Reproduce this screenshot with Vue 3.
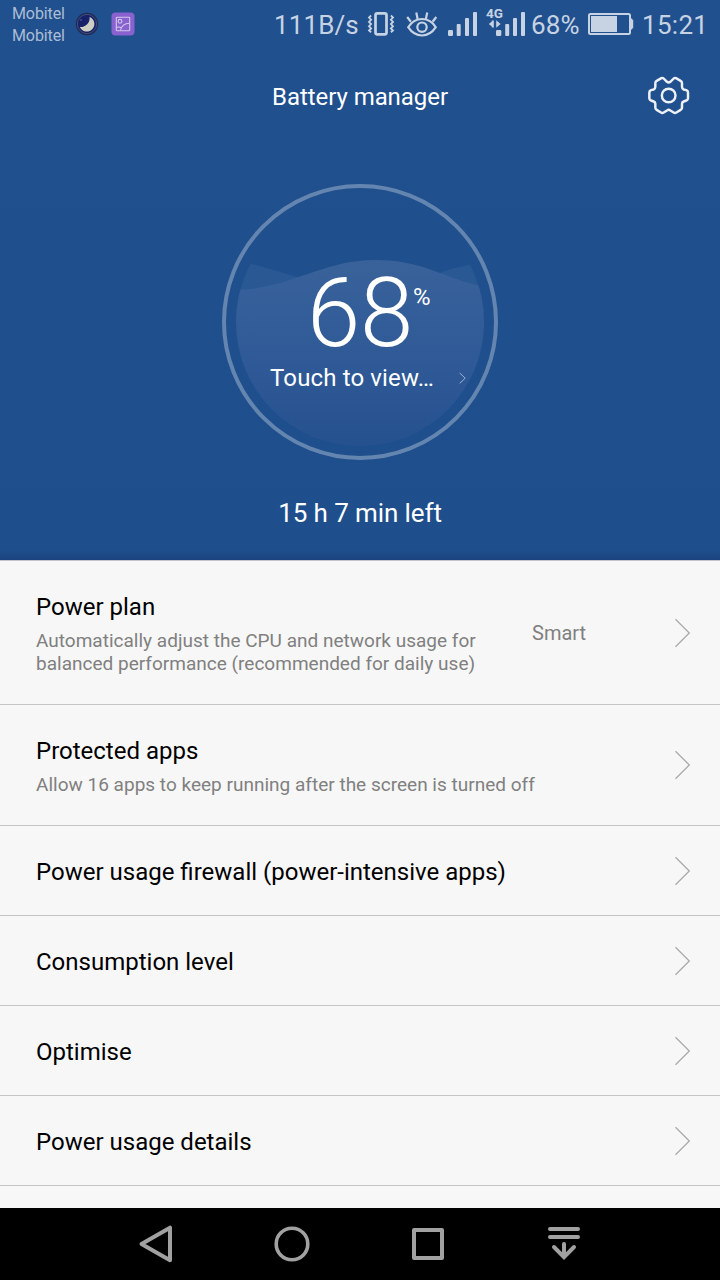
<script setup>
const rows = [
  { title: 'Power plan', lines: ['Automatically adjust the CPU and network usage for', 'balanced performance (recommended for daily use)'], value: 'Smart', height: 144 },
  { title: 'Protected apps', lines: ['Allow 16 apps to keep running after the screen is turned off'], height: 121 },
  { title: 'Power usage firewall (power-intensive apps)', height: 90 },
  { title: 'Consumption level', height: 90 },
  { title: 'Optimise', height: 90 },
  { title: 'Power usage details', height: 90 },
]
</script>

<template>
  <div class="screen">
    <section class="hero">
      <header class="status">
        <div class="carriers"><span>Mobitel</span><span>Mobitel</span></div>
        <svg class="moon" width="24" height="24" viewBox="0 0 24 24">
          <circle cx="12" cy="12" r="11.2" fill="#202b55" />
          <circle cx="12" cy="12" r="9.6" fill="#17216a" stroke="#55608a" stroke-width="0.7" />
          <path d="M14.5 4.9A7.6 7.6 0 1 1 4.8 15A8.8 8.8 0 0 0 14.5 4.9Z" fill="#cdcfc3" />
          <circle cx="6" cy="8" r="0.7" fill="#7384b4" />
        </svg>
        <svg class="gallery" width="24" height="24" viewBox="0 0 24 24">
          <rect x="0.5" y="0.5" width="23" height="23" rx="4" fill="#8a62cf" />
          <g fill="none" stroke="#d0c8ea" stroke-width="1.1">
            <rect x="5.3" y="5.3" width="13.4" height="13.4" rx="0.8" />
            <circle cx="9" cy="9.3" r="1.9" />
            <path d="M9.5 18.5C10.5 13.5 13.5 11.2 18.5 11.2M5.3 15.5Q8.5 14.2 10.3 16.2" />
          </g>
        </svg>
        <span class="speed">111B/s</span>
        <svg class="vibrate" width="28" height="26" viewBox="0 0 28 26" fill="none" stroke="#c7d3e3">
          <rect x="8.5" y="2.4" width="11" height="21" rx="1.8" stroke-width="2.7" />
          <path d="M4.1 4.5L2 6.5L4.1 8.7L2 10.9L4.1 13L2 15.2L4.1 17.4L2 19.5L4.1 21.3M23.9 4.5L26 6.5L23.9 8.7L26 10.9L23.9 13L26 15.2L23.9 17.4L26 19.5L23.9 21.3" stroke-width="1.8" />
        </svg>
        <svg class="eye" width="32" height="27" viewBox="0 0 32 27" fill="none" stroke="#c7d3e3" stroke-width="2.2">
          <path d="M2.2 16.2C6 10 10.4 8 16 8S26 10 29.8 16.2C26 22 21.5 24.5 16 24.5S6 22 2.2 16.2Z" />
          <circle cx="16" cy="16.2" r="4.7" />
          <path d="M1.2 6L4.9 10.700M10.300 1.500L11.600 8M21.200 1.500L19.900 8M30.300 6L26.600 10.700" />
        </svg>
        <svg class="bars" width="30" height="24" viewBox="0 0 30 24" fill="#c7d3e3">
          <rect x="0" y="18" width="5" height="6" rx="1.2" /><rect x="8.7" y="12" width="4" height="12" rx="1" />
          <rect x="17" y="6" width="4" height="18" rx="1" /><rect x="25" y="0" width="4" height="24" rx="1" />
        </svg>
        <div class="mobile">
          <span class="network">4G</span>
          <svg width="40" height="30" viewBox="0 0 40 30" fill="#c7d3e3">
            <path d="M7.4 14.2V21.8L2.8 18ZM10.2 14.2V21.8L14.6 18ZM5.8 14.5H7.8V21.5H5.8Z" />
            <rect x="10" y="24" width="5.3" height="6" rx="1.2" /><rect x="19.2" y="18" width="4" height="12" rx="1" />
            <rect x="27" y="12" width="4" height="18" rx="1" /><rect x="35" y="6" width="4" height="24" rx="1" />
          </svg>
        </div>
        <span class="percent">68%</span>
        <svg class="battery" width="46" height="22" viewBox="0 0 46 22">
          <rect x="1" y="1" width="41" height="20" rx="1.5" fill="none" stroke="#c7d3e3" stroke-width="2" />
          <rect x="3" y="3" width="26" height="16" fill="#c7d3e3" />
          <path d="M43 5.5H44.2V6.8H45.2V15.2H44.2V16.5H43Z" fill="#c7d3e3" />
        </svg>
        <span class="clock">15:21</span>
      </header>

      <div class="titlebar">
        <h1>Battery manager</h1>
        <svg class="gear" width="44" height="44" viewBox="48 38.5 132 132" fill="none" stroke="#edf1f6" stroke-width="7.4" stroke-linejoin="round">
          <path d="M108 62L111 65Q116 69 121 65L131 55Q134 52 138 54L152 62Q156 64 156 69V80Q156 86 161 88L169 90Q174 92 174 97V115Q174 119 169 121L161 124Q156 126 156 131V143Q156 147 152 149L139 157Q135 160 131 157L121 151Q116 147 111 151L101 157Q97 160 93 157L80 149Q76 147 76 143V131Q76 126 71 124L63 121Q58 119 58 115V97Q58 92 63 90L71 88Q76 86 76 80V69Q76 64 80 62L94 54Q98 52 101 55Z" />
          <circle cx="116" cy="106" r="20.5" />
        </svg>
      </div>

      <div class="gauge">
        <svg class="water" width="276" height="276" viewBox="0 0 276 276">
          <defs>
            <clipPath id="tank"><circle cx="138" cy="138" r="124" /></clipPath>
            <linearGradient id="sea" x1="0" y1="0" x2="0" y2="1">
              <stop offset="0" stop-color="#39629a" /><stop offset="0.5" stop-color="#2f5a97" /><stop offset="0.93" stop-color="#25518e" />
            </linearGradient>
          </defs>
          <g clip-path="url(#tank)">
            <path d="M10 77L28 79.5C45 83 60 89 78 93.5C130 106 174 100 217 89C232 84 244 81 266 77V130H10Z" fill="#295893" />
            <path d="M10 106C68 106 98 76 154 76C203 76 226 97 266 103.500V276H10Z" fill="url(#sea)" />
          </g>
          <circle cx="138" cy="138" r="136" fill="none" stroke="#6485b0" stroke-width="4" />
        </svg>
        <div class="reading"><span class="number">68</span><span class="unit">%</span></div>
        <div class="hint">
          <span>Touch to view…</span>
          <svg width="8" height="14" viewBox="0 0 8 14" fill="none" stroke="#9fb4d0" stroke-width="1"><path d="M1.7 2L7.2 7.2L1.7 12.4" /></svg>
        </div>
      </div>
      <p class="left">15 h 7 min left</p>
    </section>

    <main class="list">
      <div v-for="row in rows" :key="row.title" class="row" :style="{ height: row.height + 'px' }">
        <div class="copy">
          <h2>{{ row.title }}</h2>
          <p v-if="row.lines"><span v-for="line in row.lines" :key="line">{{ line }}</span></p>
        </div>
        <span v-if="row.value" class="value">{{ row.value }}</span>
        <svg class="chevron" width="18" height="30" viewBox="0 0 18 30" fill="none" stroke="#aaa" stroke-width="1.3"><path d="M2.5 1.3L16.3 15L2.500 28.700" /></svg>
      </div>
    </main>

    <nav class="nav">
      <svg width="136" height="72" viewBox="0 0 136 72" stroke-width="4" stroke-linejoin="round"><path d="M82 19.7V52.2L53.5 36Z" /></svg>
      <svg width="136" height="72" viewBox="0 0 136 72" stroke-width="3.6"><circle cx="68" cy="36" r="15.8" /></svg>
      <svg width="136" height="72" viewBox="0 0 136 72" stroke-width="4" stroke-linejoin="round"><rect x="54" y="22" width="28" height="28" /></svg>
      <svg width="136" height="72" viewBox="0 0 136 72" stroke-width="4" stroke-linecap="round"><path d="M54 21H82M54 29H82M68 36V48M58 39L68 49.2L78 39" /></svg>
    </nav>
  </div>
</template>

<style scoped>
.screen { width: 720px; height: 1280px; overflow: hidden; display: flex; flex-direction: column; background: #f7f7f7; font-family: Roboto, "Noto Sans", sans-serif; }
h1, h2, p { margin: 0; font-weight: 400; }
svg { display: block; flex: none; }
.hero { height: 560px; flex: none; color: #fff; display: flex; flex-direction: column; align-items: center; background: linear-gradient(to bottom, transparent 550px, rgba(20, 35, 90, .28) 560px), linear-gradient(#20508d, #1e4f8c); }
.status { width: 720px; height: 50px; display: flex; align-items: flex-start; box-sizing: border-box; padding-left: 12px; color: #c7d3e3; white-space: nowrap; }
.carriers { width: 63px; padding-top: 3px; display: flex; flex-direction: column; font-size: 16px; line-height: 22px; letter-spacing: -.1px; color: #abbdd5; }
.moon { margin-top: 12px; }
.gallery { margin: 12px 0 0 12px; }
.speed, .percent, .clock { font-size: 26px; line-height: 32px; margin-top: 9px; }
.speed { width: 93px; margin-left: 139px; letter-spacing: .1px; }
.vibrate { margin-top: 11px; }
.eye { margin: 11px 0 0 10.5px; }
.bars { margin: 12px 0 0 10.5px; }
.mobile { position: relative; width: 40px; height: 36px; margin-left: 8px; }
.mobile svg { margin-top: 6px; }
.network { position: absolute; left: 0; top: 6px; font-size: 13.5px; line-height: 15px; font-weight: 700; }
.percent { width: 57px; margin-left: 5px; letter-spacing: .2px; }
.battery { margin-top: 13px; }
.clock { margin-left: 8px; letter-spacing: .3px; }
.titlebar { width: 720px; height: 134px; flex: none; display: grid; grid-template-columns: 74px 1fr 74px; }
.titlebar h1 { grid-column: 2; margin-top: 31px; text-align: center; font-size: 24px; line-height: 32px; letter-spacing: -.06px; }
.gear { margin: 23px 0 0; }
.gauge { width: 276px; height: 276px; flex: none; display: grid; grid-template-rows: 86px 86px 44px 60px; }
.water { grid-area: 1 / 1 / 5 / 2; }
.reading { grid-area: 2 / 1; display: flex; padding-left: 85px; }
.number { font-size: 96px; font-weight: 300; line-height: 86px; letter-spacing: -.3px; }
.unit { font-size: 24px; line-height: 54px; }
.hint { grid-area: 3 / 1; display: flex; align-items: center; padding-left: 48px; font-size: 24px; line-height: 44px; white-space: nowrap; }
.hint span { width: 188px; letter-spacing: .14px; }
.left { margin-top: 37px; font-size: 26px; line-height: 32px; letter-spacing: -.1px; }
.list { flex: 1; border-top: 1px solid #c3c5cb; overflow: hidden; }
.row { box-sizing: border-box; border-bottom: 1px solid #c5c5c5; display: flex; align-items: center; padding: 0 29px 0 36px; }
.copy { align-self: flex-start; padding-top: 32px; flex: 1; white-space: nowrap; }
.copy h2 { font-size: 24px; line-height: 28px; color: #000; }
.copy p { margin-top: 8px; font-size: 19px; line-height: 23px; letter-spacing: .01px; color: #808080; }
.copy p span { display: block; }
.value { width: 141px; font-size: 20px; line-height: 24px; color: #808080; }
.nav { height: 72px; flex: none; background: #000; display: flex; justify-content: center; }
.nav svg { fill: none; stroke: #a1a1a1; }
</style>
